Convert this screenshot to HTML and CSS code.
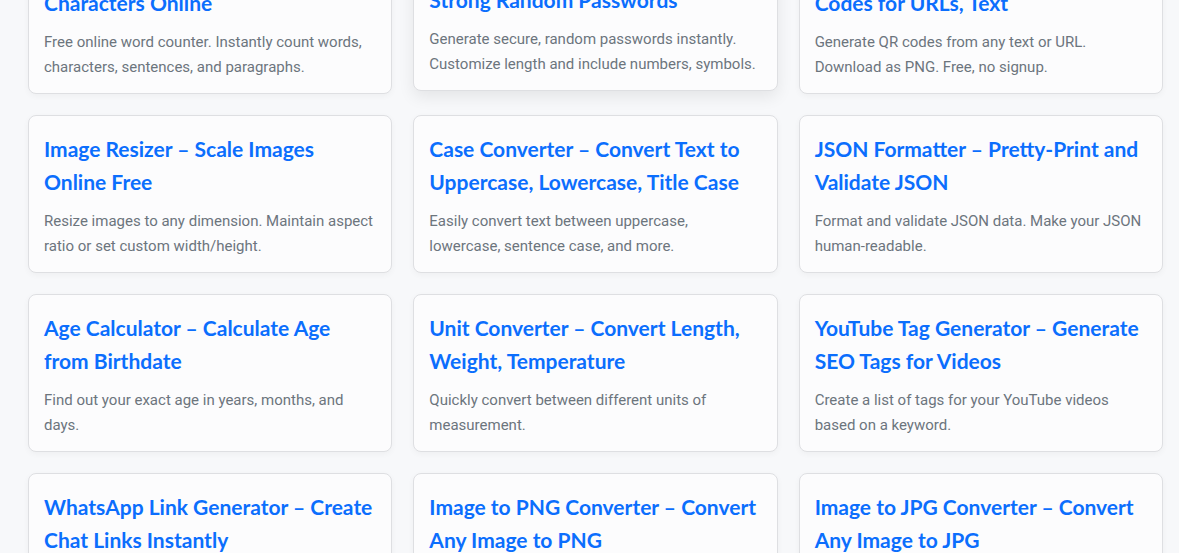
FILE: index.html
```html
<!DOCTYPE html>
<html lang="en">
<head>
<meta charset="utf-8">
<title>Free Online Tools</title>
<link rel="stylesheet" href="styles.css">
</head>
<body>
<main class="page">
  <section class="tool-grid">
    <a class="card" href="#">
      <h3 class="card-title">Word Counter – Count Words and Characters Online</h3>
      <p class="card-text">Free online word counter. Instantly count words, characters, sentences, and paragraphs.</p>
    </a>
    <a class="card card-hover" href="#">
      <h3 class="card-title">Password Generator – Create Strong Random Passwords</h3>
      <p class="card-text">Generate secure, random passwords instantly. Customize length and include numbers, symbols.</p>
    </a>
    <a class="card" href="#">
      <h3 class="card-title">QR Code Generator – Create QR Codes for URLs, Text</h3>
      <p class="card-text">Generate QR codes from any text or URL. Download as PNG. Free, no signup.</p>
    </a>
    <a class="card" href="#">
      <h3 class="card-title">Image Resizer – Scale Images Online Free</h3>
      <p class="card-text">Resize images to any dimension. Maintain aspect ratio or set custom width/height.</p>
    </a>
    <a class="card" href="#">
      <h3 class="card-title">Case Converter – Convert Text to Uppercase, Lowercase, Title Case</h3>
      <p class="card-text">Easily convert text between uppercase, lowercase, sentence case, and more.</p>
    </a>
    <a class="card" href="#">
      <h3 class="card-title">JSON Formatter – Pretty-Print and Validate JSON</h3>
      <p class="card-text">Format and validate JSON data. Make your JSON human-readable.</p>
    </a>
    <a class="card" href="#">
      <h3 class="card-title">Age Calculator – Calculate Age from Birthdate</h3>
      <p class="card-text">Find out your exact age in years, months, and days.</p>
    </a>
    <a class="card" href="#">
      <h3 class="card-title">Unit Converter – Convert Length, Weight, Temperature</h3>
      <p class="card-text">Quickly convert between different units of measurement.</p>
    </a>
    <a class="card" href="#">
      <h3 class="card-title">YouTube Tag Generator – Generate SEO Tags for Videos</h3>
      <p class="card-text">Create a list of tags for your YouTube videos based on a keyword.</p>
    </a>
    <a class="card" href="#">
      <h3 class="card-title">WhatsApp Link Generator – Create Chat Links Instantly</h3>
      <p class="card-text">Generate click-to-chat WhatsApp links with a prefilled message.</p>
    </a>
    <a class="card" href="#">
      <h3 class="card-title">Image to PNG Converter – Convert Any Image to PNG</h3>
      <p class="card-text">Convert JPG, WEBP and other images to PNG format in your browser.</p>
    </a>
    <a class="card" href="#">
      <h3 class="card-title">Image to JPG Converter – Convert Any Image to JPG</h3>
      <p class="card-text">Convert PNG, WEBP and other images to JPG format in your browser.</p>
    </a>
  </section>
</main>
</body>
</html>
```

FILE: styles.css
```css
* { box-sizing: border-box; }

html, body {
  margin: 0;
  padding: 0;
  background: #f7f8fa;
  overflow: hidden;
}

body {
  font-family: Lato, Roboto, sans-serif;
  color: #212529;
}

.page {
  padding: 0 16px 40px 28px;
}

.tool-grid {
  margin-top: -64px;
  display: grid;
  grid-template-columns: repeat(3, 1fr);
  gap: 21px;
}

.card {
  display: block;
  text-decoration: none;
  background: #fcfcfd;
  border: 1px solid #dedfe2;
  border-radius: 8px;
  padding: 16px 15px 13px 15px;
  box-shadow: 0 2px 6px rgba(0, 0, 0, 0.04);
}

.card-hover {
  transform: translateY(-3px);
  box-shadow: 0 6px 16px rgba(0, 0, 0, 0.08);
}

.card-title {
  margin: 0 0 11px;
  font-size: 21px;
  line-height: 33px;
  font-weight: 700;
  color: #0b6efd;
}

.card-text {
  margin: 0;
  font-family: Roboto, sans-serif;
  font-size: 15px;
  line-height: 25px;
  color: #6c757d;
}
```
